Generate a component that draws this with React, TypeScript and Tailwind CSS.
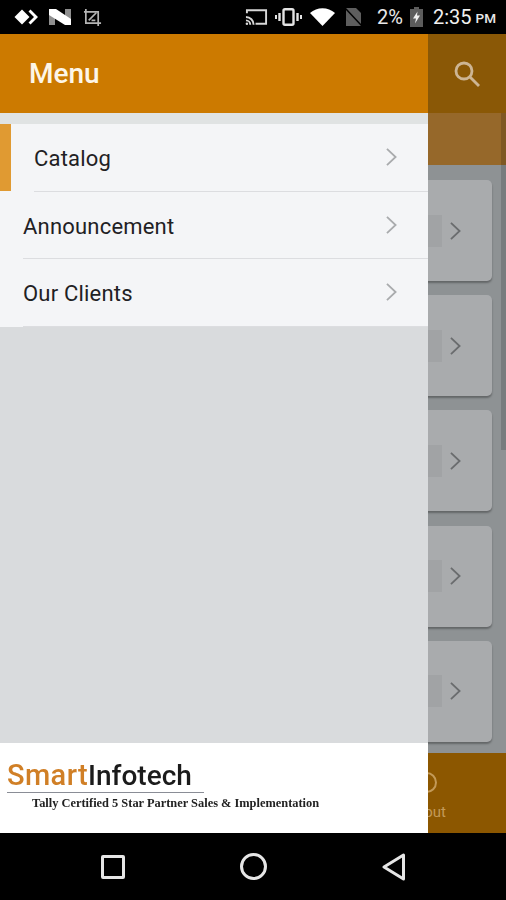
const menuItems = [
  { label: "Catalog", active: true },
  { label: "Announcement", active: false },
  { label: "Our Clients", active: false },
];

const Chevron = ({ className }: { className: string }) => (
  <svg viewBox="0 0 14 22" className={className} fill="none" stroke="currentColor" strokeWidth="2">
    <path d="M2 2l9.5 9L2 20" />
  </svg>
);

const StatusLeft = () => (
  <div className="flex items-center">
    <svg viewBox="0 0 24 16" className="ml-[14px] h-4 w-6" fill="white">
      <path d="M8 0.500l7.500 7.500-7.500 7.500L0.500 8z" />
      <path d="M16.500 0.500L24 8l-7.500 7.500-2-2L20 8l-5.500-5.500z" />
    </svg>
    <svg viewBox="0 0 22 16" className="ml-[11px] h-4 w-[22px]">
      <path d="M0 0h6v16H0z" fill="#8f8f8f" />
      <path d="M16 0h6v16h-6z" fill="#8f8f8f" />
      <path d="M0 0h7l15 10v6h-6L0 6z" fill="white" />
    </svg>
    <svg viewBox="0 0 20 20" className="ml-[12px] h-[19px] w-[19px]" fill="none" stroke="#b5b5b5" strokeWidth="1.800">
      <path d="M3 1v15h16" />
      <path d="M1 4h15v15" />
      <path d="M6 13l8-8M9 13h4" />
    </svg>
  </div>
);

const StatusRight = () => (
  <div className="flex items-center">
    <svg viewBox="0 0 24 18" className="h-[18px] w-[23px]" fill="none" stroke="#d8d8d8" strokeWidth="2">
      <path d="M2 5V2h20v14H11" />
      <path d="M1 9a8 8 0 0 1 8 8M1 12.500a4.500 4.500 0 0 1 4.500 4.500" />
      <circle cx="2" cy="16" r="1.300" fill="#d8d8d8" stroke="none" />
    </svg>
    <svg viewBox="0 0 27 18" className="ml-[7px] h-[18px] w-[27px]" fill="none" stroke="#e4e4e4">
      <rect x="8.500" y="1.200" width="10" height="15.600" rx="1.500" strokeWidth="2.400" />
      <path d="M4.500 5v8M22.500 5v8" strokeWidth="2.400" />
      <path d="M1 7v4M26 7v4" strokeWidth="2" />
    </svg>
    <svg viewBox="0 0 25 18" className="ml-[8px] h-[18px] w-[25px]" fill="white">
      <path d="M0 5C7-1.500 18-1.500 25 5L12.500 18z" />
    </svg>
    <svg viewBox="0 0 17 18" className="ml-[10px] h-[18px] w-[17px]">
      <path d="M1 18V0h10l5 5v13z" fill="#5e5e5e" />
      <path d="M0 0l17 18" stroke="black" strokeWidth="1.500" />
    </svg>
    <span className="ml-[15px] text-[20px] leading-none text-[#e8e8e8]">2%</span>
    <svg viewBox="0 0 13 20" className="ml-[7px] h-5 w-[13px]">
      <path d="M4 0h5v2h4v18H0V2h4z" fill="#5c5c5c" />
      <path d="M7.500 4.500L3 11.500h3L5 16.500l5-8H7z" fill="#f0f0f0" />
    </svg>
    <span className="ml-[10px] text-[20px] leading-none text-[#f0f0f0]">2:35</span>
    <span className="ml-[4px] mr-[10px] mt-[4px] text-[13.500px] font-medium leading-none text-[#e8e8e8]">PM</span>
  </div>
);

const BehindCard = () => (
  <div className="flex h-[101px] items-center justify-between rounded-[5px] bg-[#a9abad] pr-[30px] shadow-[0_2px_2px_rgba(0,0,0,0.3)]">
    <div className="h-[32px] w-[142px] bg-[#a1a3a5]" />
    <Chevron className="h-[20px] w-[13px] text-[#6a6c6e]" />
  </div>
);

export default function App() {
  return (
    <div className="relative flex h-[900px] w-[506px] flex-col overflow-hidden bg-black font-['Roboto',sans-serif]">
      {/* status bar */}
      <div className="z-10 flex h-[34px] shrink-0 items-center justify-between bg-black">
        <StatusLeft />
        <StatusRight />
      </div>

      {/* page under the drawer */}
      <div className="flex h-[79px] shrink-0 items-center justify-end bg-[#8a5806] pr-[26px]">
        <svg viewBox="0 0 26 26" className="h-[26px] w-[26px]" fill="none" stroke="#cdb594" strokeWidth="2.800">
          <circle cx="10" cy="10" r="8" />
          <path d="M16 16l9 9" />
        </svg>
      </div>
      <div className="h-[52px] shrink-0 bg-[#96682a]" />
      <div className="flex h-[588px] shrink-0 flex-col gap-[14.200px] bg-[#8e9294] pb-[11px] pl-[300px] pr-[14px] pt-[15px]">
        <BehindCard />
        <BehindCard />
        <BehindCard />
        <BehindCard />
        <BehindCard />
      </div>
      <div className="flex h-[80px] shrink-0 justify-end bg-[#8c5700] pr-[60px] pt-[19px]">
        <div className="flex flex-col items-center">
          <div className="h-[21px] w-[21px] rounded-full border-2 border-[#c39a58]" />
          <span className="mt-[12px] text-[15px] leading-none text-[#c39a58]">About</span>
        </div>
      </div>

      {/* scrollbar of the page under the drawer */}
      <div className="absolute right-0 top-[113px] h-[337px] w-[5px] bg-black/15" />

      {/* drawer */}
      <div className="absolute bottom-[67px] left-0 top-[34px] flex w-[428px] flex-col bg-[#d9dbdd]">
        <div className="flex h-[79px] shrink-0 items-center bg-[#cc7a00] pl-[29px]">
          <span className="text-[28px] font-medium text-[#fdf6e8]">Menu</span>
        </div>
        <div className="h-[11px] shrink-0 bg-[#e0e3e3]" />
        <div className="flex shrink-0 flex-col bg-[#f4f5f7]">
          {menuItems.map((item) => (
            <div key={item.label} className="flex h-[67.500px] items-center">
              {item.active && <div className="h-[67px] w-[11px] shrink-0 bg-[#e09a32]" />}
              <div className="ml-[23px] flex h-full flex-1 items-center justify-between border-b border-[#dcdde0] pr-[30px]">
                <span className="pt-[3px] text-[22px] tracking-[0.2px] text-[#1f2124]">{item.label}</span>
                <Chevron className="h-[20px] w-[13px] text-[#a9abad]" />
              </div>
            </div>
          ))}
        </div>
        <div className="flex-1" />
        <div className="flex h-[90px] shrink-0 flex-col bg-white pl-[7px] pt-[16px] blur-[0.4px]">
          <div className="w-[197px] border-b border-[#8a8d96] text-[29px] font-medium leading-[33px]">
            <span className="tracking-[0.4px] text-[#d07f26]">Smart</span>
            <span className="text-[28px] text-[#1b1b1b]">Infotech</span>
          </div>
          <span className="ml-[25px] mt-[4px] text-[12.400px] font-bold leading-none text-[#222222] [font-family:'Liberation_Serif',serif]">
            Tally Certified 5 Star Partner Sales &amp; Implementation
          </span>
        </div>
      </div>

      {/* nav bar */}
      <div className="z-10 flex h-[67px] shrink-0 items-center bg-black pl-[101px]">
        <div className="h-[24px] w-[24px] rounded-[2px] border-[3px] border-[#e6e6e6]" />
        <div className="ml-[115px] h-[27px] w-[27px] rounded-full border-[3px] border-[#e6e6e6]" />
        <svg viewBox="0 0 24 28" className="ml-[115px] h-[28px] w-[24px]" fill="none" stroke="#e6e6e6" strokeWidth="3" strokeLinejoin="round">
          <path d="M21.500 2v24L2 14z" />
        </svg>
      </div>
    </div>
  );
}
